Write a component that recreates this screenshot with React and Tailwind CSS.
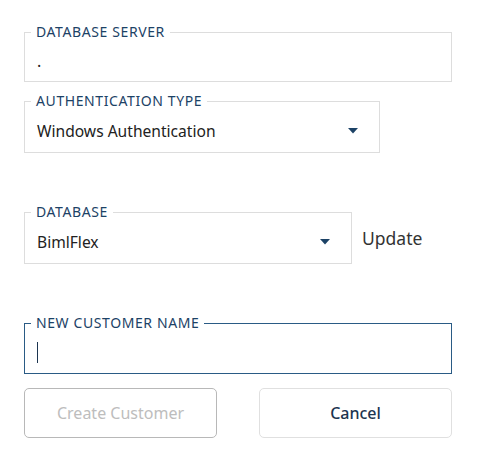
import React from 'react';

const Caret = () => (
  <svg width="10" height="6" viewBox="0 0 10 6" className="shrink-0">
    <path d="M0 0 H10 L5 5.5 Z" fill="#1c4266" />
  </svg>
);

const Field = ({ label, width, focused, children }) => (
  <fieldset
    className={`${width} border ${focused ? 'border-[#2a5b85]' : 'border-[#dddddd]'}`}
  >
    <legend className="ml-[6px] px-[5px] text-[14px] leading-4 tracking-[0.6px] text-[#1c4266]">
      {label}
    </legend>
    {children}
  </fieldset>
);

const App = () => {
  return (
    <div className="w-[478px] h-[456px] bg-white px-6 pt-6 font-['Noto_Sans',sans-serif] text-[#222]">
      {/* Database Server */}
      <Field label="DATABASE SERVER" width="w-[428px]">
        <div className="h-[41px] px-3 flex items-center text-[16px] leading-6">.</div>
      </Field>

      {/* Authentication Type */}
      <div className="mt-[11px]">
        <Field label="AUTHENTICATION TYPE" width="w-[356px]">
          <div className="h-[43px] pl-3 pr-[21px] flex items-center justify-between text-[15.6px] leading-6">
            <span>Windows Authentication</span>
            <Caret />
          </div>
        </Field>
      </div>

      {/* Database */}
      <div className="mt-[51px] flex items-end gap-[10px]">
        <Field label="DATABASE" width="w-[328px]">
          <div className="h-[43px] pl-3 pr-[21px] flex items-center justify-between text-[15.6px] leading-6">
            <span>BimlFlex</span>
            <Caret />
          </div>
        </Field>
        <span className="h-[52px] flex items-center text-[17.5px] text-[#333]">Update</span>
      </div>

      {/* New Customer Name */}
      <div className="mt-[51px]">
        <Field label="NEW CUSTOMER NAME" width="w-[428px]" focused>
          <div className="h-[42px] px-3 flex items-center">
            <span className="w-px h-[21px] bg-[#1c3550]"></span>
          </div>
        </Field>
      </div>

      {/* Buttons */}
      <div className="mt-[14px] flex justify-between w-[428px]">
        <button
          type="button"
          disabled
          className="w-[193px] h-[50px] rounded-[5px] border border-[#b8b8b8] text-[16px] text-[#bdbdbd] bg-white"
        >
          Create Customer
        </button>
        <button
          type="button"
          className="w-[193px] h-[50px] rounded-[5px] border border-[#e0e0e0] text-[16px] font-medium text-[#1c3550] bg-white"
        >
          Cancel
        </button>
      </div>
    </div>
  );
};

export default App;
